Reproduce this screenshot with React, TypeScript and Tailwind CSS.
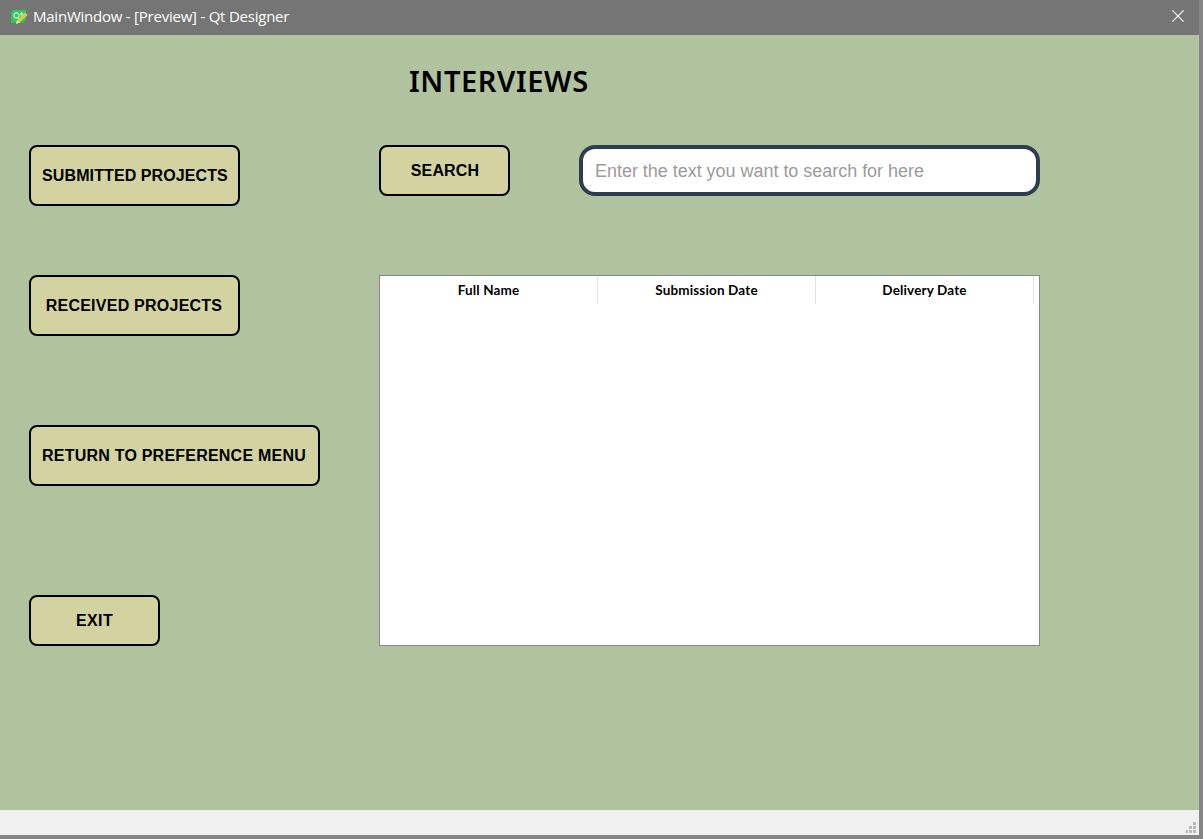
import type { ReactNode } from "react";

const buttonBase =
  "flex shrink-0 items-center justify-center whitespace-nowrap rounded-lg border-2 border-black bg-[#d3d3a1] font-['Liberation_Sans',sans-serif] text-[16px] leading-none font-bold text-black";

function PushButton({ className, label, textClass = "" }: { className: string; label: string; textClass?: string }) {
  return (
    <button className={`${buttonBase} ${className}`}>
      <span className={textClass}>{label}</span>
    </button>
  );
}

function HeaderCell({ children }: { children: ReactNode }) {
  return (
    <div className="flex h-7 w-[218px] items-center justify-center border-r border-[#e2e2e2] pt-px font-['Lato',sans-serif] text-[13.5px] font-bold tracking-[0.15px] text-black">
      {children}
    </div>
  );
}

function DesignerIcon() {
  return (
    <svg width="18" height="16" viewBox="0 0 18 16" className="mt-px">
      <path d="M2 1h13v10l-3 3H0V3z" fill="#35c65a" />
      <path d="M5.5 4h-1L3 5.5v2L4.5 9h2L8 7.5v-2L6.5 4zM7 8l1.5 2M10.5 3v5l1 1M9 4.8h3.5" fill="none" stroke="#b9efc0" strokeWidth="1.3" />
      <path d="M14 3.5l2.5 2.5-8 7.5L5 15l1-3.5z" fill="#e4ca45" />
      <path d="M14 3.5l2.5 2.5-1.5 1.5-2.5-2.5z" fill="#c4bd87" />
      <path d="M6 11.5l2.5 2L5 15z" fill="#f3e5ba" />
    </svg>
  );
}

export default function App() {
  return (
    <div className="h-[839px] w-[1203px] overflow-hidden border-r-4 border-b-4 border-[#858585] bg-[#b0c29e]">
      <div className="flex h-full flex-col">
        <header className="flex h-[35px] shrink-0 items-center bg-[#757575] pr-[15px] pb-[3px] pl-[11px] text-white">
          <DesignerIcon />
          <span className="ml-[4px] font-['Open_Sans',sans-serif] text-[15px] leading-[20px] tracking-[-0.23px] whitespace-nowrap">
            MainWindow - [Preview] - Qt Designer
          </span>
          <button className="ml-auto" aria-label="Close">
            <svg width="12" height="12" viewBox="0 0 12 12" className="block">
              <path d="M0.4 0.4l11.2 11.2M11.6 0.4L0.4 11.6" stroke="white" strokeWidth="1.2" />
            </svg>
          </button>
        </header>

        <main className="flex min-h-0 flex-1 pl-[29px]">
          <nav className="flex w-[350px] shrink-0 flex-col items-start pt-[110px]">
            <PushButton className="h-[61px] w-[211px] pl-[1px]" label="SUBMITTED PROJECTS" textClass="tracking-[0.1px]" />
            <PushButton className="mt-[69px] h-[61px] w-[211px] pr-px" label="RECEIVED PROJECTS" textClass="tracking-[0.24px]" />
            <PushButton className="mt-[89px] h-[61px] w-[291px] pr-px" label="RETURN TO PREFERENCE MENU" textClass="tracking-[0.22px]" />
            <PushButton className="mt-[109px] h-[51px] w-[131px]" label="EXIT" textClass="tracking-[0.4px]" />
          </nav>

          <section className="flex w-[661px] flex-col">
            <h1 className="mt-[26px] ml-[30px] h-[40px] font-['Noto_Sans',sans-serif] text-[29px] leading-[40px] font-semibold tracking-[0.6px] whitespace-nowrap text-black">
              INTERVIEWS
            </h1>
            <div className="mt-[44px] flex h-[51px] justify-between">
              <PushButton className="h-[51px] w-[131px] pl-px" label="SEARCH" textClass="tracking-[0.15px]" />
              <input
                className="h-[51px] w-[461px] rounded-[16px] border-4 border-[#2c3e50] bg-white px-3 pt-[2px] font-['Liberation_Sans',sans-serif] text-[18px] tracking-[-0.03px] text-black outline-none placeholder:text-[#9b9b9b]"
                placeholder="Enter the text you want to search for here"
              />
            </div>
            <div className="mt-[79px] h-[371px] border border-[#828790] bg-white">
              <div className="flex">
                <HeaderCell>Full Name</HeaderCell>
                <HeaderCell>Submission Date</HeaderCell>
                <HeaderCell>Delivery Date</HeaderCell>
              </div>
            </div>
          </section>
        </main>

        <footer className="flex h-[25px] shrink-0 items-end justify-end bg-[#f0f0f0] pr-[3px] pb-[2px]">
          <svg width="10" height="11" viewBox="0 0 10 11" fill="#b9b9b9">
            <path d="M7 0h3v3H7zM3 4h3v3H3zM7 4h3v3H7zM0 8h2v3H0zM3 8h3v3H3zM7 8h3v3H7z" />
          </svg>
        </footer>
      </div>
    </div>
  );
}
